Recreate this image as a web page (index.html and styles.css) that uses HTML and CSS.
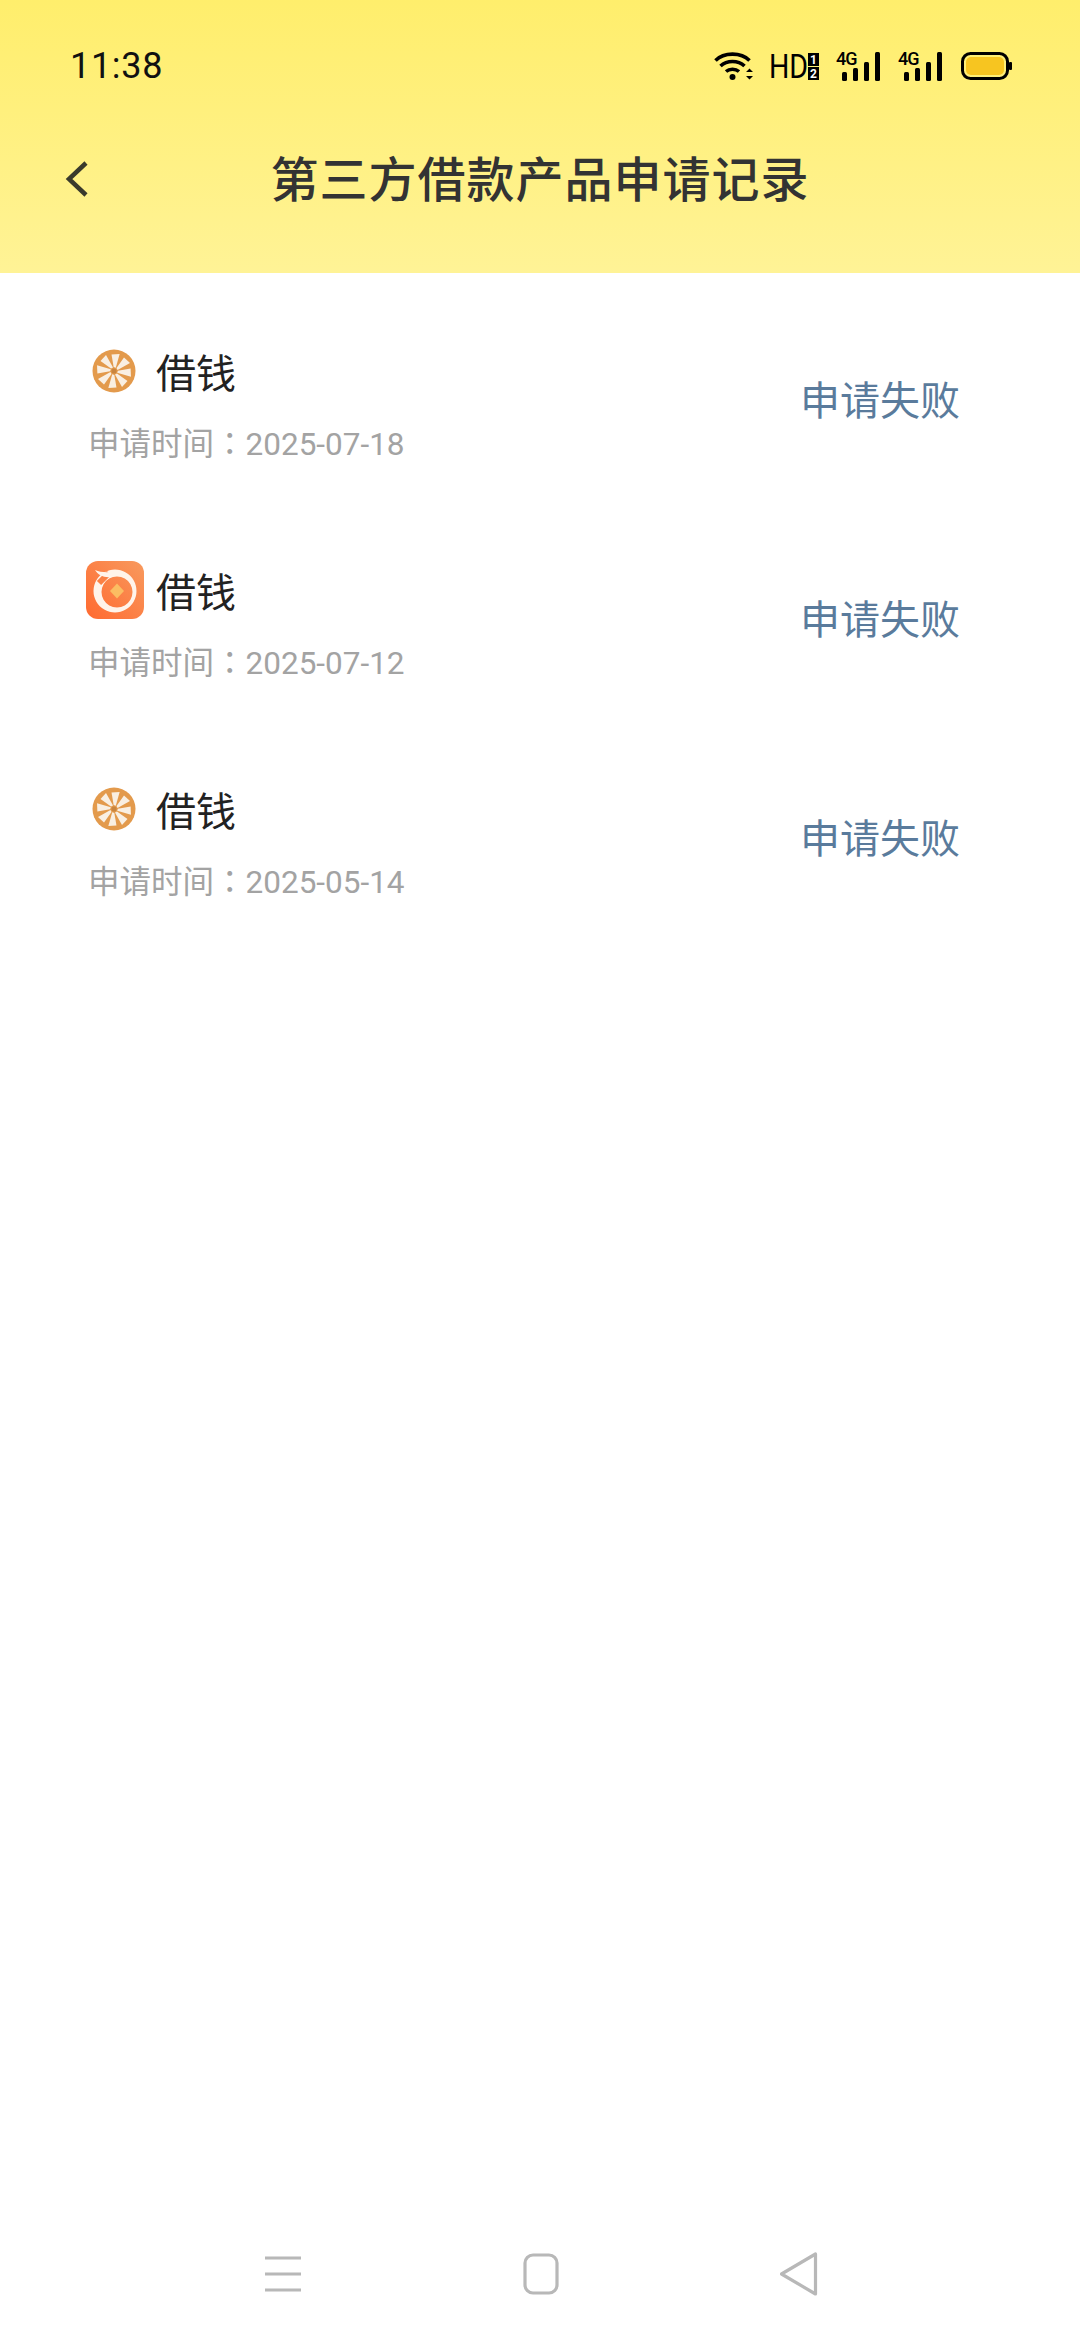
FILE: index.html
```html
<!DOCTYPE html>
<html lang="zh">
<head>
<meta charset="utf-8">
<title>第三方借款产品申请记录</title>
<link rel="stylesheet" href="styles.css">
</head>
<body>
<svg class="defs" width="0" height="0">
  <defs>
    <g id="pin">
      <circle cx="22" cy="22" r="21.500" fill="#e39a4c"/>
      <g id="blades" fill="#f9efe2">
        <path id="b" d="M24.500 19L32 8.500L38 14L25.500 21Z"/>
        <use href="#b" transform="rotate(45 22 22)"/>
        <use href="#b" transform="rotate(90 22 22)"/>
        <use href="#b" transform="rotate(135 22 22)"/>
        <use href="#b" transform="rotate(180 22 22)"/>
        <use href="#b" transform="rotate(225 22 22)"/>
        <use href="#b" transform="rotate(270 22 22)"/>
        <use href="#b" transform="rotate(315 22 22)"/>
      </g>
      <circle cx="22" cy="22" r="2.500" fill="#c9853f"/>
    </g>
  </defs>
</svg>
<div class="screen">
  <header class="header">
    <div class="status">
      <span class="time">11:38</span>
      <div class="status-icons">
        <svg class="ic-wifi" width="40" height="29" viewBox="0 0 40 29"><path d="M1.500 8.500C10 0 27 0 35.500 8.500M6.500 14C13 8 24 8 30.500 14M12 19.500C15.500 16.500 21.500 16.500 25 19.500" fill="none" stroke="#000" stroke-width="3.600"/><circle cx="18.500" cy="25" r="3" fill="#000"/><path d="M32 20l3.500-3.500 3.500 3.500zM32 24l3.500 3.500 3.500-3.500z" fill="#000"/></svg>
        <span class="hd">HD</span>
        <svg class="ic-sim" width="11" height="27" viewBox="0 0 11 27"><rect width="11" height="13" fill="#000"/><rect y="14" width="11" height="13" fill="#000"/><text x="5.500" y="11" class="sim-num">1</text><text x="5.500" y="25" class="sim-num">2</text></svg>
        <svg class="ic-sig" width="44" height="36" viewBox="0 -6 44 36"><text x="0" y="14" class="sig-text">4G</text><rect x="6" y="21" width="5" height="9" rx="1.500"/><rect x="17" y="17" width="5" height="13" rx="1.500"/><rect x="28" y="11" width="5" height="19" rx="1.500"/><rect x="39" y="1" width="5" height="29" rx="1.500"/></svg>
        <svg class="ic-sig" width="44" height="36" viewBox="0 -6 44 36"><text x="0" y="14" class="sig-text">4G</text><rect x="6" y="21" width="5" height="9" rx="1.500"/><rect x="17" y="17" width="5" height="13" rx="1.500"/><rect x="28" y="11" width="5" height="19" rx="1.500"/><rect x="39" y="1" width="5" height="29" rx="1.500"/></svg>
        <svg class="ic-bat" width="51" height="28" viewBox="0 0 51 28"><rect x="1.500" y="1.500" width="45" height="25" rx="8" fill="none" stroke="#000" stroke-width="3"/><rect x="5" y="5" width="38" height="18" rx="5" fill="#f7c520"/><rect x="48" y="10" width="3" height="8" rx="1" fill="#000"/></svg>
      </div>
    </div>
    <div class="nav">
      <svg class="back" width="24" height="38" viewBox="0 0 24 38"><path d="M21 3L4 19l17 16" fill="none" stroke="#3a3a2c" stroke-width="4.500"/></svg>
      <h1 class="title">第三方借款产品申请记录</h1>
    </div>
  </header>
  <main class="list">
    <div class="row">
      <div class="info">
        <div class="name-line">
          <span class="logo-box"><svg class="pin" width="44" height="44" viewBox="0 0 44 44"><use href="#pin"/></svg></span>
          <span class="name">借钱</span>
        </div>
        <div class="date">申请时间<span class="colon" lang="zh-Hant">：</span>2025-07-18</div>
      </div>
      <div class="state">申请失败</div>
    </div>
    <div class="row">
      <div class="info">
        <div class="name-line">
          <span class="logo-box"><svg width="58" height="58" viewBox="0 0 58 58"><defs><linearGradient id="og" x1="0" y1="1" x2="1" y2="0"><stop offset="0" stop-color="#ff6a30"/><stop offset="1" stop-color="#f89a5e"/></linearGradient></defs><rect width="58" height="58" rx="12" fill="url(#og)"/><path fill-rule="evenodd" d="M29 8.500a21.500 21.500 0 1 1-.01 0zM31 15.500a15.500 15.500 0 1 0 .01 0z" fill="#fff4ea"/><path d="M13 22L23 12" stroke="#fb8145" stroke-width="6"/><path d="M9 9C16 12 25 12 33 9C34 11 31 15 25 16C18 17 12 14 9 9Z" fill="#fff4ea"/><path d="M31 22.500l7 7.500-7 7.500-7-7.500z" fill="#fbbd62"/></svg></span>
          <span class="name">借钱</span>
        </div>
        <div class="date">申请时间<span class="colon" lang="zh-Hant">：</span>2025-07-12</div>
      </div>
      <div class="state">申请失败</div>
    </div>
    <div class="row">
      <div class="info">
        <div class="name-line">
          <span class="logo-box"><svg class="pin" width="44" height="44" viewBox="0 0 44 44"><use href="#pin"/></svg></span>
          <span class="name">借钱</span>
        </div>
        <div class="date">申请时间<span class="colon" lang="zh-Hant">：</span>2025-05-14</div>
      </div>
      <div class="state">申请失败</div>
    </div>
  </main>
  <footer class="softkeys">
    <svg width="36" height="36" viewBox="0 0 36 36"><path d="M0 2h36M0 18h36M0 34h36" stroke="#b8b8b8" stroke-width="3.200"/></svg>
    <svg width="36" height="42" viewBox="0 0 36 42"><rect x="2" y="2" width="32" height="38" rx="8" fill="none" stroke="#b8b8b8" stroke-width="3.200"/></svg>
    <svg width="38" height="46" viewBox="0 0 38 46"><path d="M35.500 3V43L1.500 23Z" fill="none" stroke="#b8b8b8" stroke-width="3.200" stroke-linejoin="round"/></svg>
  </footer>
</div>
</body>
</html>
```
FILE: styles.css
```css
* { box-sizing: border-box; margin: 0; padding: 0; }
html, body { width: 1080px; height: 2340px; background: #fff; }
body { font-family: "Roboto", "Noto Sans CJK SC", sans-serif; }
.defs { position: absolute; }
.screen { width: 1080px; height: 2340px; display: flex; flex-direction: column; background: #fff; }
.header { height: 273px; background: linear-gradient(180deg, #ffee6c 0%, #fff396 100%); display: flex; flex-direction: column; }
.status { height: 120px; padding: 12px 68px 0 70px; display: flex; align-items: center; justify-content: space-between; flex-shrink: 0; }
.time { font-size: 36px; color: #111; letter-spacing: 0.7px; font-family: "Roboto", sans-serif; }
.status-icons { display: flex; align-items: center; }
.ic-wifi { margin-right: 15px; }
.hd { display: inline-block; width: 36px; font-family: "Roboto", sans-serif; font-size: 34px; color: #000; line-height: 1; transform: scaleX(0.84); transform-origin: left center; white-space: nowrap; }
.ic-sim { margin-left: 3px; margin-right: 17px; }
.sim-num { font-family: "Roboto", sans-serif; font-size: 12px; font-weight: 700; fill: #fff; text-anchor: middle; }
.ic-sig { margin-right: 18px; margin-top: -6px; fill: #000; }
.sig-text { font-family: "Roboto", sans-serif; font-size: 18px; font-weight: 500; letter-spacing: -1px; fill: #000; }
.ic-bat { margin-left: 1px; }
.nav { position: relative; height: 118px; padding-bottom: 6px; display: flex; align-items: center; justify-content: center; }
.back { position: absolute; left: 65px; top: 40px; }
.title { font-size: 48px; font-weight: 500; color: #333; font-family: "Noto Sans CJK SC", sans-serif; letter-spacing: 1px; }
.list { display: flex; flex-direction: column; padding: 15px 120px 0 87px; }
.row { height: 219px; display: flex; align-items: center; justify-content: space-between; }
.info { display: flex; flex-direction: column; gap: 23px; margin-top: 10px; margin-left: -1px; }
.name-line { display: flex; align-items: center; height: 58px; }
.logo-box { width: 58px; height: 58px; display: flex; align-items: center; justify-content: center; margin-right: 12px; flex-shrink: 0; }
.pin { margin-right: 3px; }
.name { font-size: 40px; color: #222; font-family: "Noto Sans CJK SC", sans-serif; line-height: 1; }
.date { margin-left: 2px; font-size: 31.500px; color: #a3a3a3; line-height: 36px; font-family: "Roboto", "Noto Sans CJK SC", sans-serif; white-space: nowrap; }
.colon { font-family: "Noto Sans CJK TC", sans-serif; }
.state { font-size: 40px; color: #5a7b9c; font-family: "Noto Sans CJK SC", sans-serif; line-height: 1; }
.softkeys { margin-top: auto; height: 112px; padding: 0 262px 20px 265px; display: flex; align-items: center; justify-content: space-between; }
```
